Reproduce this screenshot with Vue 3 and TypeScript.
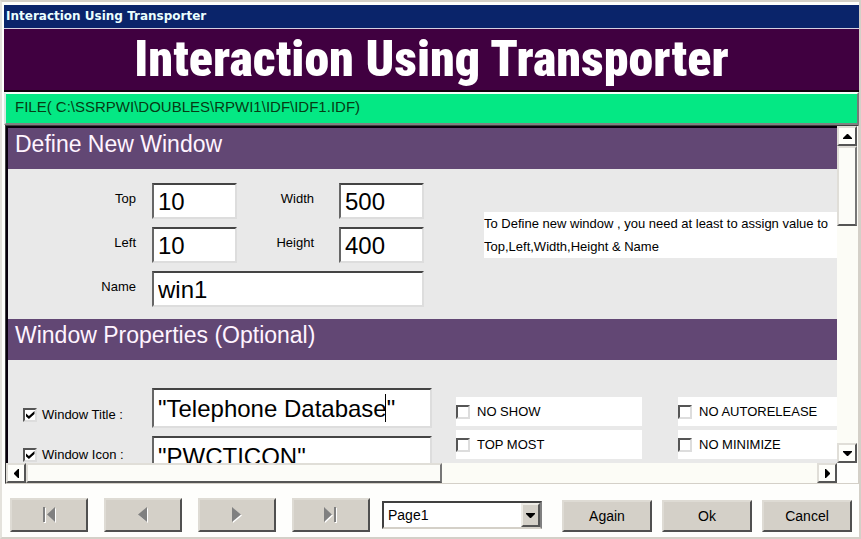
<script setup lang="ts">
import { ref } from 'vue'

interface Flag { label: string; on: boolean }
interface NavButton { label: string; path: string }

const caption = 'Interaction Using Transporter'
const size = ref({ top: '10', left: '10', width: '500', height: '400', name: 'win1' })
const titleOn = ref(true)
const iconOn = ref(true)
const title = ref('"Telephone Database"')
const icon = ref('"PWCTICON"')
const page = ref('Page1')

const flags = ref<Flag[]>([
  { label: 'NO SHOW', on: false },
  { label: 'NO AUTORELEASE', on: false },
  { label: 'TOP MOST', on: false },
  { label: 'NO MINIMIZE', on: false },
])

const nav: NavButton[] = [
  { label: 'First', path: 'M4 1h2v15h-2z M16 1v15l-8-7.5z' },
  { label: 'Previous', path: 'M14 1v15l-9-7.5z' },
  { label: 'Next', path: 'M5 1v15l9-7.5z' },
  { label: 'Last', path: 'M3 1v15l8-7.5z M13 1h2v15h-2z' },
]
</script>

<template>
  <main class="window">
    <header class="caption">{{ caption }}</header>
    <h1 class="banner">{{ caption }}</h1>
    <p class="file">FILE( C:\SSRPWI\DOUBLES\RPWI1\IDF\IDF1.IDF)</p>

    <div class="pane">
      <div class="content">
        <h2>Define New Window</h2>
        <section class="define">
          <div class="fields">
            <label for="f-top">Top</label>
            <input id="f-top" v-model="size.top" class="box" type="text" />
            <label for="f-width">Width</label>
            <input id="f-width" v-model="size.width" class="box" type="text" />
            <label for="f-left">Left</label>
            <input id="f-left" v-model="size.left" class="box" type="text" />
            <label for="f-height">Height</label>
            <input id="f-height" v-model="size.height" class="box" type="text" />
            <label for="f-name">Name</label>
            <input id="f-name" v-model="size.name" class="box wide" type="text" />
          </div>
          <p class="note">
            To Define new window , you need at least to assign value to<br />
            Top,Left,Width,Height &amp; Name
          </p>
        </section>

        <h2>Window Properties (Optional)</h2>
        <section class="props">
          <div class="toggles">
            <label class="tick"><input v-model="titleOn" type="checkbox" />Window Title :</label>
            <label class="tick"><input v-model="iconOn" type="checkbox" />Window Icon :</label>
          </div>
          <div class="edits">
            <div class="edit">
              <input v-model="title" class="box" type="text" aria-label="Window Title" />
              <span class="caret"></span>
            </div>
            <div class="edit">
              <input v-model="icon" class="box" type="text" aria-label="Window Icon" />
            </div>
          </div>
          <div class="flags">
            <label v-for="f in flags" :key="f.label" class="tick flag">
              <input v-model="f.on" type="checkbox" />{{ f.label }}
            </label>
          </div>
        </section>
      </div>

      <div class="bar vertical">
        <button type="button" class="arrow" aria-label="Scroll up">
          <svg width="9" height="5" viewBox="0 0 9 5"><path d="M4 0h1l4 4v1H0V4z" /></svg>
        </button>
        <div class="thumb"></div>
        <button type="button" class="arrow last" aria-label="Scroll down">
          <svg width="9" height="5" viewBox="0 0 9 5"><path d="M0 0h9v1L5 5H4L0 1z" /></svg>
        </button>
      </div>
      <div class="bar horizontal">
        <button type="button" class="arrow" aria-label="Scroll left">
          <svg width="5" height="9" viewBox="0 0 5 9"><path d="M5 0v9H4L0 5V4l4-4z" /></svg>
        </button>
        <div class="thumb"></div>
        <button type="button" class="arrow last" aria-label="Scroll right">
          <svg width="5" height="9" viewBox="0 0 5 9"><path d="M0 0h1l4 4v1L1 9H0z" /></svg>
        </button>
      </div>
    </div>

    <footer class="footer">
      <button v-for="n in nav" :key="n.label" type="button" class="push nav" :aria-label="n.label">
        <svg width="20" height="18" viewBox="0 0 20 18">
          <path :d="n.path" fill="#fff" transform="translate(1 1)" />
          <path :d="n.path" fill="#808080" />
        </svg>
      </button>
      <div class="picker">
        <select v-model="page" aria-label="Page">
          <option>Page1</option>
        </select>
        <span class="drop">
          <svg width="9" height="5" viewBox="0 0 9 5"><path d="M0 0h9v1L5 5H4L0 1z" /></svg>
        </span>
      </div>
      <div class="actions">
        <button type="button" class="push">Again</button>
        <button type="button" class="push">Ok</button>
        <button type="button" class="push">Cancel</button>
      </div>
    </footer>
  </main>
</template>

<style>
body {
  margin: 0;
  background: #fdfdfb;
}
</style>

<style scoped>
* {
  box-sizing: border-box;
}
.window {
  display: flex;
  flex-direction: column;
  height: 100vh;
  overflow: hidden;
  padding: 2px 0 0 2px;
  border: 2px solid #d4d0c8;
  border-left-color: #e4e2dc;
  background: #fefefc;
  color: #000;
  font: 14px/16px "Liberation Sans", Arial, sans-serif;
}
h1, h2, p {
  margin: 0;
  font-weight: 400;
}
button, input, select {
  margin: 0;
  font: inherit;
  color: inherit;
  border-radius: 0;
}
.caption {
  margin-top: 1px;
  padding: 0 2px;
  border-bottom: 1px solid #d4d0e0;
  background: #0a246a;
  color: #eaffff;
  font: bold 12px/23px "DejaVu Sans", Verdana, sans-serif;
}
.banner {
  border-bottom: 2px solid #10000c;
  background: #400040;
  color: #fff;
  text-align: center;
  white-space: nowrap;
  font: 900 50px/61px Impact, "Roboto Condensed", Roboto, sans-serif;
}
.file {
  padding: 5px 9px 8px;
  border: 2px solid;
  border-color: #f4fff8 #777 #808080 #d8e8e0;
  background: #04e884;
  color: #063c14;
  white-space: nowrap;
  font-size: 15px;
}
.pane {
  flex: 1;
  min-height: 0;
  display: grid;
  grid-template: minmax(0, 1fr) 20px / minmax(0, 1fr) 21px;
  margin-left: 1px;
  border: 1px solid #404040;
  border-right-color: #d4d0c8;
  border-bottom-color: #d4d0c8;
}
.content {
  overflow: hidden;
  border-top: 2px solid #08000c;
  border-left: 2px solid #08000c;
  background: #e9e9e9;
}
h2 {
  padding: 3px 7px 11px;
  background: #624774;
  color: #fff4ff;
  font-size: 23px;
  line-height: 27px;
}
.define {
  display: flex;
  align-items: flex-start;
  gap: 60px;
  padding: 14px 0 12px;
}
.fields {
  flex: none;
  display: grid;
  grid-template-columns: 129px 85px 102px 85px;
  row-gap: 8px;
  padding-left: 15px;
  font-size: 13px;
}
.fields label {
  padding: 8px 16px 0 0;
  text-align: right;
}
.fields label:nth-of-type(even) {
  padding-right: 25px;
}
.box {
  width: 100%;
  height: 36px;
  padding: 2px 4px 0;
  border: 2px solid;
  border-color: #444 #ddd #ddd #666;
  outline: 0;
  background: #fff;
  font-size: 24px;
}
.box.wide {
  grid-column: 2 / -1;
}
.note {
  flex: 1;
  min-width: 0;
  margin-top: 29px;
  overflow: hidden;
  background: #fff;
  white-space: nowrap;
  font-size: 13px;
  line-height: 23px;
}
.props {
  display: flex;
  align-items: flex-start;
  padding-top: 28px;
}
.tick {
  display: flex;
  align-items: center;
  gap: 5px;
  white-space: nowrap;
  font-size: 13px;
}
.toggles {
  flex: none;
  display: grid;
  gap: 24px;
  width: 144px;
  padding: 19px 0 0 15px;
}
.tick input {
  appearance: none;
  flex: none;
  display: grid;
  place-items: center;
  width: 14px;
  height: 14px;
  border: 2px solid;
  border-color: #555 #ddd #ddd #555;
  background: #fff;
}
.tick input:checked::before {
  content: "";
  width: 9px;
  height: 8px;
  background: #000;
  clip-path: polygon(0 25%, 38% 62%, 100% 0, 100% 38%, 38% 100%, 0 62%);
}
.edits {
  flex: none;
  display: grid;
  gap: 8px;
  width: 280px;
}
.edit {
  position: relative;
}
.edit .box {
  display: block;
  height: 40px;
}
.caret {
  position: absolute;
  left: 233px;
  top: 6px;
  width: 1px;
  height: 28px;
  background: #000;
}
.flags {
  flex: 1;
  display: grid;
  grid-template-columns: 186px minmax(0, 1fr);
  gap: 4px 36px;
  margin: 9px 0 0 24px;
}
.flag {
  gap: 7px;
  height: 29px;
  background: #fff;
}
.bar {
  display: flex;
  background: #fcfcf6;
}
.vertical {
  flex-direction: column;
}
.horizontal {
  grid-column: 1;
}
.arrow {
  flex: none;
  display: grid;
  place-items: center;
  width: 20px;
  height: 20px;
  padding: 0;
  border: 2px solid;
  border-color: #e0ded8 #555 #555 #e0ded8;
  background: #fefefa;
}
.arrow.last {
  margin-left: auto;
}
.vertical .arrow.last {
  margin: auto 0 0;
}
.thumb {
  border: 2px solid;
  border-color: #e0ded8 #777 #555 #e0ded8;
  background: #fcfcf8;
}
.vertical .thumb {
  width: 20px;
  height: 80px;
}
.horizontal .thumb {
  width: 50%;
}
.footer {
  display: flex;
  align-items: flex-end;
  gap: 16px;
  padding: 14px 7px 5px 6px;
}
.push {
  height: 32px;
  padding: 0;
  border: 2px solid;
  border-color: #dedbd4 #505050 #505050 #dedbd4;
  background: #d4d0c8;
}
.nav {
  display: grid;
  place-items: center;
  width: 78px;
  height: 34px;
}
.picker {
  position: relative;
  flex: 1;
  align-self: center;
  margin-left: -4px;
}
.picker select {
  appearance: none;
  display: block;
  width: 100%;
  height: 28px;
  padding: 0 4px;
  border: 2px solid;
  border-color: #404040 #808080 #d4d0c8 #404040;
  background: #fff;
}
.drop {
  position: absolute;
  top: 2px;
  right: 2px;
  bottom: 2px;
  display: grid;
  place-items: center;
  width: 19px;
  border: 2px solid;
  border-color: #eeece6 #555 #555 #eeece6;
  background: #d4d0c8;
  pointer-events: none;
}
.actions {
  display: flex;
  gap: 10px;
  margin-left: 4px;
}
.actions .push {
  width: 90px;
}
</style>
